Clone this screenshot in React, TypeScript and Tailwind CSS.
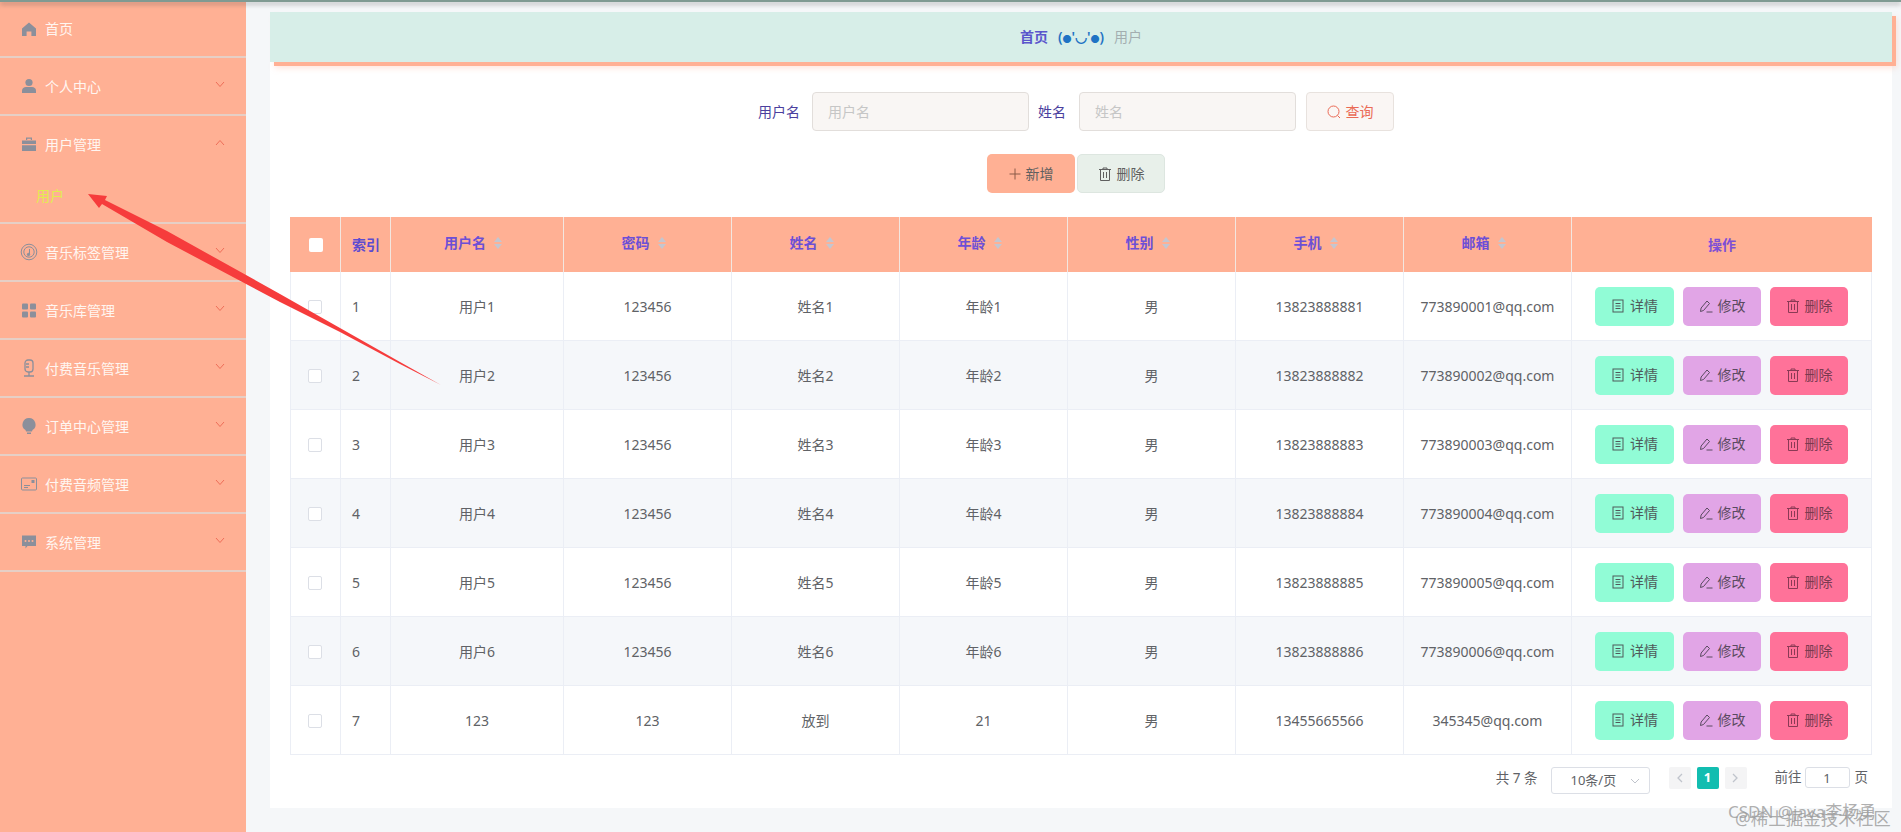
import { ReactNode } from 'react';

type Row = { id: number; user: string; pwd: string; name: string; age: string; phone: string; mail: string };

const rows: Row[] = [
  { id: 1, user: '用户1', pwd: '123456', name: '姓名1', age: '年龄1', phone: '13823888881', mail: '773890001@qq.com' },
  { id: 2, user: '用户2', pwd: '123456', name: '姓名2', age: '年龄2', phone: '13823888882', mail: '773890002@qq.com' },
  { id: 3, user: '用户3', pwd: '123456', name: '姓名3', age: '年龄3', phone: '13823888883', mail: '773890003@qq.com' },
  { id: 4, user: '用户4', pwd: '123456', name: '姓名4', age: '年龄4', phone: '13823888884', mail: '773890004@qq.com' },
  { id: 5, user: '用户5', pwd: '123456', name: '姓名5', age: '年龄5', phone: '13823888885', mail: '773890005@qq.com' },
  { id: 6, user: '用户6', pwd: '123456', name: '姓名6', age: '年龄6', phone: '13823888886', mail: '773890006@qq.com' },
  { id: 7, user: '123', pwd: '123', name: '放到', age: '21', phone: '13455665566', mail: '345345@qq.com' },
];

const sortCols = ['用户名', '密码', '姓名', '年龄', '性别', '手机', '邮箱'];

function Chevron({ up }: { up?: boolean }) {
  return (
    <svg width="10" height="7" viewBox="0 0 10 7" fill="none" stroke="#ee6e58" strokeWidth="1" className="mb-[4px]">
      <path d={up ? 'M1 6l4-4.5L9 6' : 'M1 1l4 4.5L9 1'} />
    </svg>
  );
}

function HomeIcon() {
  return (
    <svg width="16" height="16" viewBox="0 0 16 16" fill="#8b8f9b">
      <path d="M8 1.5L1 7.5V15h4.6v-4.5h4.8V15H15V7.5z" />
    </svg>
  );
}
function UserIcon() {
  return (
    <svg width="16" height="16" viewBox="0 0 16 16" fill="#8b8f9b">
      <circle cx="8" cy="4.5" r="3.6" />
      <path d="M1 15v-2.5C1 10.3 3 9 5 9h6c2 0 4 1.3 4 3.5V15z" />
    </svg>
  );
}
function CaseIcon() {
  return (
    <svg width="16" height="16" viewBox="0 0 16 16" fill="#8b8f9b">
      <path d="M5 4V1.5h6V4H9.8V2.7H6.200V4z" />
      <path d="M1 4.500h14V8H1zM1 9.200h14V15H1z" />
    </svg>
  );
}
function DialIcon() {
  return (
    <svg width="18" height="18" viewBox="0 0 18 18" fill="none" stroke="#8b8f9b" strokeWidth="1">
      <circle cx="9" cy="9" r="7.800" />
      <circle cx="9" cy="9" r="5.200" />
      <circle cx="8.500" cy="11.500" r="1.200" fill="#8b8f9b" />
      <path d="M9.500 11V6" />
    </svg>
  );
}
function GridIcon() {
  return (
    <svg width="16" height="16" viewBox="0 0 16 16" fill="#8b8f9b">
      <rect x="1" y="1.500" width="6" height="6" rx="1" />
      <rect x="9" y="1.500" width="6" height="6" rx="1" />
      <rect x="1" y="9.500" width="6" height="6" rx="1" />
      <rect x="9" y="9.500" width="6" height="6" rx="1" />
    </svg>
  );
}
function MicIcon() {
  return (
    <svg width="16" height="18" viewBox="0 0 16 18" fill="none" stroke="#8b8f9b" strokeWidth="1.300">
      <rect x="4" y="1" width="8" height="12" rx="3" />
      <path d="M5 5h3M5 8h3M3 17h10M8 13v4" />
    </svg>
  );
}
function BulbIcon() {
  return (
    <svg width="16" height="18" viewBox="0 0 16 18" fill="#8b8f9b">
      <path d="M8 1a6.500 6.500 0 0 0-3.500 12l.5 1.500h6l.5-1.500A6.500 6.500 0 0 0 8 1z" />
      <path d="M6 15.500h4V17H6z" />
    </svg>
  );
}
function CardIcon() {
  return (
    <svg width="16" height="14" viewBox="0 0 16 14" fill="none" stroke="#8b8f9b" strokeWidth="1">
      <rect x="0.500" y="1" width="15" height="12" rx="1" />
      <path d="M3 8.500h6M3 10.500h4" />
      <rect x="11" y="3.500" width="2" height="2" fill="#8b8f9b" />
    </svg>
  );
}
function ChatIcon() {
  return (
    <svg width="16" height="16" viewBox="0 0 16 16" fill="#8b8f9b">
      <path d="M1 1.500h14V12H6.500l-2 2.500V12H1z" />
      <circle cx="4.500" cy="7" r="1" fill="#ffb094" />
      <circle cx="8" cy="7" r="1" fill="#ffb094" />
      <circle cx="11.500" cy="7" r="1" fill="#ffb094" />
    </svg>
  );
}

function TrashIcon({ color }: { color: string }) {
  return (
    <svg width="14" height="14" viewBox="0 0 14 14" fill="none" stroke={color} strokeWidth="1">
      <path d="M1 2.500h12M5 2.500V1h4v1.500M2.500 2.500v11h9v-11M5.500 5v6M8.500 5v6" />
    </svg>
  );
}
function DocIcon() {
  return (
    <svg width="14" height="14" viewBox="0 0 14 14" fill="none" stroke="#4f5a5a" strokeWidth="1">
      <rect x="2" y="1" width="10" height="12" />
      <path d="M4.500 4.500h5M4.500 7h5M4.500 9.500h5" />
    </svg>
  );
}
function PenIcon() {
  return (
    <svg width="14" height="14" viewBox="0 0 14 14" fill="none" stroke="#5a4a60" strokeWidth="1">
      <path d="M1.500 12.500l.6-3.500L8 2l2.500 2.500-6 7z" />
      <path d="M7.500 13h6" />
    </svg>
  );
}

function NavItem({ icon, label, down = true }: { icon: ReactNode; label: string; down?: boolean }) {
  return (
    <div className="flex h-[58px] items-center border-b-2 border-[#e6cfc6] pr-[21px] pl-[20px]">
      <span className="flex w-[18px] justify-center">{icon}</span>
      <span className="ml-[7px] flex-1 pt-[1px] text-sm text-[#fff6f1]">{label}</span>
      {down && <Chevron />}
    </div>
  );
}

function Sidebar() {
  return (
    <aside className="w-[246px] shrink-0 bg-[#ffb094]">
      <div className="flex h-[56px] items-center border-b-2 border-[#e6cfc6] pl-[20px]">
        <span className="flex w-[18px] justify-center">
          <HomeIcon />
        </span>
        <span className="ml-[7px] text-sm text-[#fff6f1]">首页</span>
      </div>
      <NavItem icon={<UserIcon />} label="个人中心" />
      <div className="border-b-2 border-[#e6cfc6]">
        <div className="flex h-[56px] items-center pr-[21px] pl-[20px]">
          <span className="flex w-[18px] justify-center">
            <CaseIcon />
          </span>
          <span className="ml-[7px] flex-1 pt-[1px] text-sm text-[#fff6f1]">用户管理</span>
          <Chevron up />
        </div>
        <div className="flex h-[50px] items-center pb-[2px] pl-[36px] text-sm text-[#e2ec50]">用户</div>
      </div>
      <NavItem icon={<DialIcon />} label="音乐标签管理" />
      <NavItem icon={<GridIcon />} label="音乐库管理" />
      <NavItem icon={<MicIcon />} label="付费音乐管理" />
      <NavItem icon={<BulbIcon />} label="订单中心管理" />
      <NavItem icon={<CardIcon />} label="付费音频管理" />
      <NavItem icon={<ChatIcon />} label="系统管理" />
    </aside>
  );
}

function SortHead({ label }: { label: string }) {
  return (
    <th className="border-r border-[#f3e6e0] p-0 pb-[1px] text-center align-middle text-sm font-semibold text-[#6c4fd6]">
      <span className="relative -top-[1px] inline-flex items-center">
        {label}
        <span className="ml-[8px] flex w-[16px] flex-col items-start gap-[2px]">
          <span className="h-0 w-0 border-x-[4px] border-b-[5px] border-x-transparent border-b-[#c4c6d0]" />
          <span className="h-0 w-0 border-x-[4px] border-t-[5px] border-x-transparent border-t-[#c4c6d0]" />
        </span>
      </span>
    </th>
  );
}

function TableRow({ row, striped }: { row: Row; striped: boolean }) {
  const cell = 'border-r border-b border-[#ebeef5] p-0 pt-[2px] text-center text-sm text-[#606266]';
  return (
    <tr className={striped ? 'h-[69px] bg-[#f5f7fa]' : 'h-[69px] bg-white'}>
      <td className="border-r border-b border-l border-[#ebeef5] p-0 pt-[2px] pl-[17px]">
        <span className="block h-[14px] w-[14px] rounded-[2px] border border-[#dcdfe6] bg-white" />
      </td>
      <td className="border-r border-b border-[#ebeef5] p-0 pt-[2px] pl-[11px] text-sm text-[#606266]">{row.id}</td>
      <td className={cell}>{row.user}</td>
      <td className={cell}>{row.pwd}</td>
      <td className={cell}>{row.name}</td>
      <td className={cell}>{row.age}</td>
      <td className={cell}>男</td>
      <td className={cell}>{row.phone}</td>
      <td className={cell}>{row.mail}</td>
      <td className="border-r border-b border-[#ebeef5] p-0">
        <div className="flex items-center justify-center gap-[9px]">
          <button className="flex h-[39px] w-[79px] items-center justify-center gap-[5px] rounded-[5px] bg-[#91fcd6] text-sm text-[#4f5a5a]">
            <DocIcon />
            详情
          </button>
          <button className="flex h-[39px] w-[78px] items-center justify-center gap-[5px] rounded-[5px] bg-[#e1a5e6] text-sm text-[#5a4a60]">
            <PenIcon />
            修改
          </button>
          <button className="flex h-[39px] w-[78px] items-center justify-center gap-[5px] rounded-[5px] bg-[#ff7299] text-sm text-[#7a3a50]">
            <TrashIcon color="#8a3a55" />
            删除
          </button>
        </div>
      </td>
    </tr>
  );
}

function UserTable() {
  return (
    <table className="w-[1582px] table-fixed border-separate border-spacing-0">
      <colgroup>
        <col className="w-[51px]" />
        <col className="w-[50px]" />
        <col className="w-[173px]" />
        <col className="w-[168px]" />
        <col className="w-[168px]" />
        <col className="w-[168px]" />
        <col className="w-[168px]" />
        <col className="w-[168px]" />
        <col className="w-[168px]" />
        <col className="w-[300px]" />
      </colgroup>
      <thead>
        <tr className="h-[55px] bg-[#ffb094]">
          <th className="border-r border-[#f3e6e0] p-0 pl-[19px]">
            <span className="block h-[14px] w-[14px] rounded-[2px] bg-white" />
          </th>
          <th className="border-r border-[#f3e6e0] p-0 pl-[11px] text-left text-sm font-semibold text-[#5d4bd0]">索引</th>
          {sortCols.map((c) => (
            <SortHead key={c} label={c} />
          ))}
          <th className="p-0 text-center text-sm font-semibold text-[#7d4fd6]">操作</th>
        </tr>
      </thead>
      <tbody>
        {rows.map((r, i) => (
          <TableRow key={r.id} row={r} striped={i % 2 === 1} />
        ))}
      </tbody>
    </table>
  );
}

function Pagination() {
  return (
    <div className="flex items-start justify-end pt-[12px] pr-[4px] text-[13.5px] text-[#606266]">
      <span className="mt-[1px] mr-[13px]">共 7 条</span>
      <div className="mr-[19px] flex h-[27px] w-[99px] items-center justify-between rounded-[3px] border border-[#dcdfe6] pr-[9px] pl-[19px] text-[13px]">
        10条/页
        <svg width="10" height="6" viewBox="0 0 10 6" fill="none" stroke="#c0c4cc">
          <path d="M1 1l4 4 4-4" />
        </svg>
      </div>
      <span className="flex h-[22px] w-[22px] items-center justify-center rounded-[2px] bg-[#f4f4f5]">
        <svg width="7" height="10" viewBox="0 0 7 10" fill="none" stroke="#c0c4cc" strokeWidth="1.300">
          <path d="M6 1L2 5l4 4" />
        </svg>
      </span>
      <span className="ml-[6px] flex h-[22px] w-[22px] items-center justify-center rounded-[2px] bg-[#12bdb0] text-[13px] font-bold text-white">1</span>
      <span className="ml-[6px] flex h-[22px] w-[22px] items-center justify-center rounded-[2px] bg-[#f4f4f5]">
        <svg width="7" height="10" viewBox="0 0 7 10" fill="none" stroke="#c0c4cc" strokeWidth="1.300">
          <path d="M1 1l4 4-4 4" />
        </svg>
      </span>
      <span className="ml-[28px]">前往</span>
      <input
        readOnly
        value="1"
        className="mr-[5px] ml-[3px] h-[21px] w-[45px] rounded-[3px] border border-[#dcdfe6] text-center text-[13px] text-[#606266] outline-none"
      />
      <span>页</span>
    </div>
  );
}

export default function App() {
  return (
    <div className="relative h-[832px] w-[1901px] overflow-hidden bg-[#f5f7f9] font-['Noto_Sans','Noto_Sans_CJK_SC',sans-serif]">
      <div className="relative z-10 h-[2px] bg-[#7f9a92] shadow-[0_2px_5px_rgba(70,70,70,0.55)]" />
      <div className="flex h-[830px]">
        <Sidebar />
        <main className="flex-1 pt-[10px] pr-[9px] pl-[24px]">
          <div className="relative z-[1] flex h-[50px] items-center justify-center bg-[#d7eee8] text-sm shadow-[4px_4px_0_#ffb094,5px_6px_6px_rgba(255,176,148,0.35)]">
            <span className="font-semibold text-[#5a55cc]">首页</span>
            <span className="mx-[10px] font-semibold text-[#1f73c4]">
              (<span className="text-[9px]">●</span>'◡'<span className="text-[9px]">●</span>)
            </span>
            <span className="text-[#a3aeb0]">用户</span>
          </div>
          <section className="h-[746px] bg-white pt-[30px] pr-[20px] pl-[20px]">
            <div className="flex items-center justify-center pr-[10px] text-sm">
              <label className="mr-[12px] text-[#4b3f9e]">用户名</label>
              <input
                placeholder="用户名"
                className="h-[39px] w-[217px] rounded-[4px] border border-[#e2dedb] bg-[#f9f6f4] px-[15px] text-sm outline-none placeholder:text-[#c6c6c6]"
              />
              <label className="mr-[13px] ml-[9px] text-[#4b3f9e]">姓名</label>
              <input
                placeholder="姓名"
                className="h-[39px] w-[217px] rounded-[4px] border border-[#e2dedb] bg-[#f9f6f4] px-[15px] text-sm outline-none placeholder:text-[#c6c6c6]"
              />
              <button className="ml-[10px] flex h-[39px] w-[88px] items-center justify-center gap-[5px] rounded-[4px] border border-[#e8e2de] bg-[#faf6f4] text-sm text-[#ea6a55]">
                <svg width="14" height="14" viewBox="0 0 14 14" fill="none" stroke="#ea6a55">
                  <circle cx="6.500" cy="6.500" r="5.500" />
                  <path d="M10.500 10.500l2.500 2.500" />
                </svg>
                查询
              </button>
            </div>
            <div className="mt-[23px] flex justify-center gap-[2px] pr-[10px] text-sm text-[#5f5f5f]">
              <button className="flex h-[39px] w-[88px] items-center justify-center gap-[5px] rounded-[5px] bg-[#ffb094]">
                <svg width="12" height="12" viewBox="0 0 12 12" stroke="#8a5a48">
                  <path d="M6 .5v11M.5 6h11" />
                </svg>
                新增
              </button>
              <button className="flex h-[39px] w-[88px] items-center justify-center gap-[5px] rounded-[5px] border border-[#dde6e0] bg-[#e8f0ea]">
                <TrashIcon color="#5f5f5f" />
                删除
              </button>
            </div>
            <div className="mt-[24px]">
              <UserTable />
              <Pagination />
            </div>
          </section>
        </main>
      </div>

      {/* annotation arrow pasted on top of the screenshot */}
      <svg className="absolute top-0 left-0 z-20" width="460" height="400" viewBox="0 0 460 400" fill="#f63c3c">
        <polygon points="88,194 107,196 105,200 167,231 280,294 340,328 400,362 441,385 400,364 340,332 280,302 167,242 102,204 99,208" />
      </svg>

      {/* doubled watermark bottom right */}
      <span className="absolute top-[799px] left-[1728px] z-20 text-[17px] whitespace-nowrap text-[#9a9a9a]/80">CSDN @java李杨勇</span>
      <span className="absolute top-[805px] left-[1735px] z-20 text-[17.5px] whitespace-nowrap text-[#9a9a9a]/80">@稀土掘金技术社区</span>
    </div>
  );
}
